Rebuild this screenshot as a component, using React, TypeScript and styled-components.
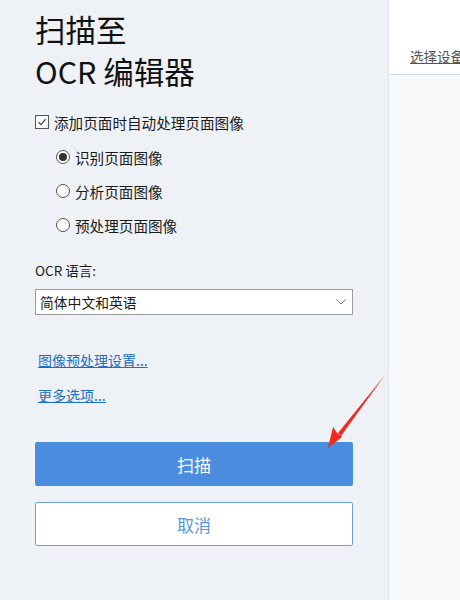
import React from 'react';
import styled, { createGlobalStyle } from 'styled-components';

const Global = createGlobalStyle`
  html, body { margin: 0; padding: 0; }
  body {
    font-family: "Noto Sans CJK SC", "Noto Sans", "Liberation Sans", sans-serif;
    background: #f8f9fb;
  }
`;

const Page = styled.div`
  position: relative;
  width: 460px;
  height: 600px;
  display: flex;
  overflow: hidden;
`;

const Sidebar = styled.div`
  width: 389px;
  flex: none;
  background: #eef1f5;
  border-right: 1px solid #dfe3e8;
  padding: 8px 35px 0 35px;
  box-sizing: border-box;
  display: flex;
  flex-direction: column;
`;

const TitleLine = styled.div`
  font-size: 30.5px;
  font-weight: 400;
  line-height: 42px;
  height: 42px;
  color: #111;
  white-space: nowrap;
`;

const CheckRow = styled.label`
  display: flex;
  align-items: center;
  gap: 5px;
  margin-top: 20px;
  font-size: 14.6px;
  color: #1a1a1a;
  height: 20px;
`;

const Box = styled.span`
  width: 12px;
  height: 12px;
  border: 1px solid #555;
  background: #fff;
  display: flex;
  align-items: center;
  justify-content: center;
`;

const RadioGroup = styled.div`
  display: flex;
  flex-direction: column;
  gap: 14px;
  margin-top: 15px;
  padding-left: 21px;
`;

const RadioRow = styled.label`
  display: flex;
  align-items: center;
  gap: 5px;
  font-size: 14.6px;
  color: #1a1a1a;
  height: 20px;
`;

const Dot = styled.span<{ $on?: boolean }>`
  width: 12px;
  height: 12px;
  border-radius: 50%;
  border: 1px solid #555;
  background: #fff;
  display: flex;
  align-items: center;
  justify-content: center;
  &::after {
    content: '';
    width: 8px;
    height: 8px;
    border-radius: 50%;
    background: ${p => (p.$on ? '#333' : 'transparent')};
  }
`;

const FieldLabel = styled.div`
  margin-top: 26px;
  font-size: 13.5px;
  color: #1a1a1a;
  line-height: 18px;
`;

const Select = styled.div`
  margin-top: 10px;
  height: 26px;
  border: 1px solid #9a9a9a;
  background: #fff;
  display: flex;
  align-items: center;
  justify-content: space-between;
  padding: 0 6px 0 4px;
  font-size: 13.8px;
  color: #1a1a1a;
  box-sizing: border-box;
`;

const LinkText = styled.a<{ $top: number }>`
  display: block;
  margin-top: ${p => p.$top}px;
  margin-left: 3px;
  font-size: 14px;
  line-height: 18px;
  color: #1a6fc9;
  text-decoration: underline;
  cursor: pointer;
`;

const Button = styled.button<{ $primary?: boolean }>`
  width: 100%;
  height: 44px;
  font-family: inherit;
  font-size: 17px;
  border-radius: 2px;
  cursor: pointer;
  box-sizing: border-box;
  background: ${p => (p.$primary ? '#4a8ddf' : '#fff')};
  color: ${p => (p.$primary ? '#fff' : '#5b93d8')};
  border: 1px solid ${p => (p.$primary ? '#4a8ddf' : '#6ea0e0')};
`;

const Buttons = styled.div`
  margin-top: 38px;
  display: flex;
  flex-direction: column;
  gap: 16px;
`;

const Main = styled.div`
  flex: 1;
  display: flex;
  flex-direction: column;
`;

const Header = styled.div`
  height: 75px;
  background: #fff;
  border-bottom: 1px solid #d6dde6;
  box-sizing: border-box;
  padding: 43px 0 0 21px;
  white-space: nowrap;
  overflow: hidden;
`;

const DeviceLink = styled.span`
  font-size: 13.5px;
  color: #555;
  text-decoration: underline;
`;

const Arrow = styled.svg`
  position: absolute;
  left: 0;
  top: 0;
  pointer-events: none;
`;

export default function App() {
  return (
    <Page>
      <Global />
      <Sidebar>
        <TitleLine>扫描至</TitleLine>
        <TitleLine>OCR 编辑器</TitleLine>
        <CheckRow>
          <Box>
            <svg width="10" height="10" viewBox="0 0 10 10">
              <path d="M1.5 5.2 L4 7.6 L8.6 2.2" fill="none" stroke="#444" strokeWidth="1.2" />
            </svg>
          </Box>
          添加页面时自动处理页面图像
        </CheckRow>
        <RadioGroup>
          <RadioRow>
            <Dot $on />
            识别页面图像
          </RadioRow>
          <RadioRow>
            <Dot />
            分析页面图像
          </RadioRow>
          <RadioRow>
            <Dot />
            预处理页面图像
          </RadioRow>
        </RadioGroup>
        <FieldLabel>OCR 语言:</FieldLabel>
        <Select>
          简体中文和英语
          <svg width="10" height="6" viewBox="0 0 10 6">
            <path d="M0.5 0.5 L5 5 L9.5 0.5" fill="none" stroke="#777" strokeWidth="1" />
          </svg>
        </Select>
        <LinkText $top={36}>图像预处理设置...</LinkText>
        <LinkText $top={17}>更多选项...</LinkText>
        <Buttons>
          <Button $primary>扫描</Button>
          <Button>取消</Button>
        </Buttons>
      </Sidebar>
      <Main>
        <Header>
          <DeviceLink>选择设备</DeviceLink>
        </Header>
      </Main>
      <Arrow width="460" height="600" viewBox="0 0 460 600">
        <path d="M385 375 L338 433 L341 436 Z" fill="#f02a1e" />
        <path d="M328 448 L333 427 L337 433 L342 437 Z" fill="#f02a1e" />
      </Arrow>
    </Page>
  );
}
